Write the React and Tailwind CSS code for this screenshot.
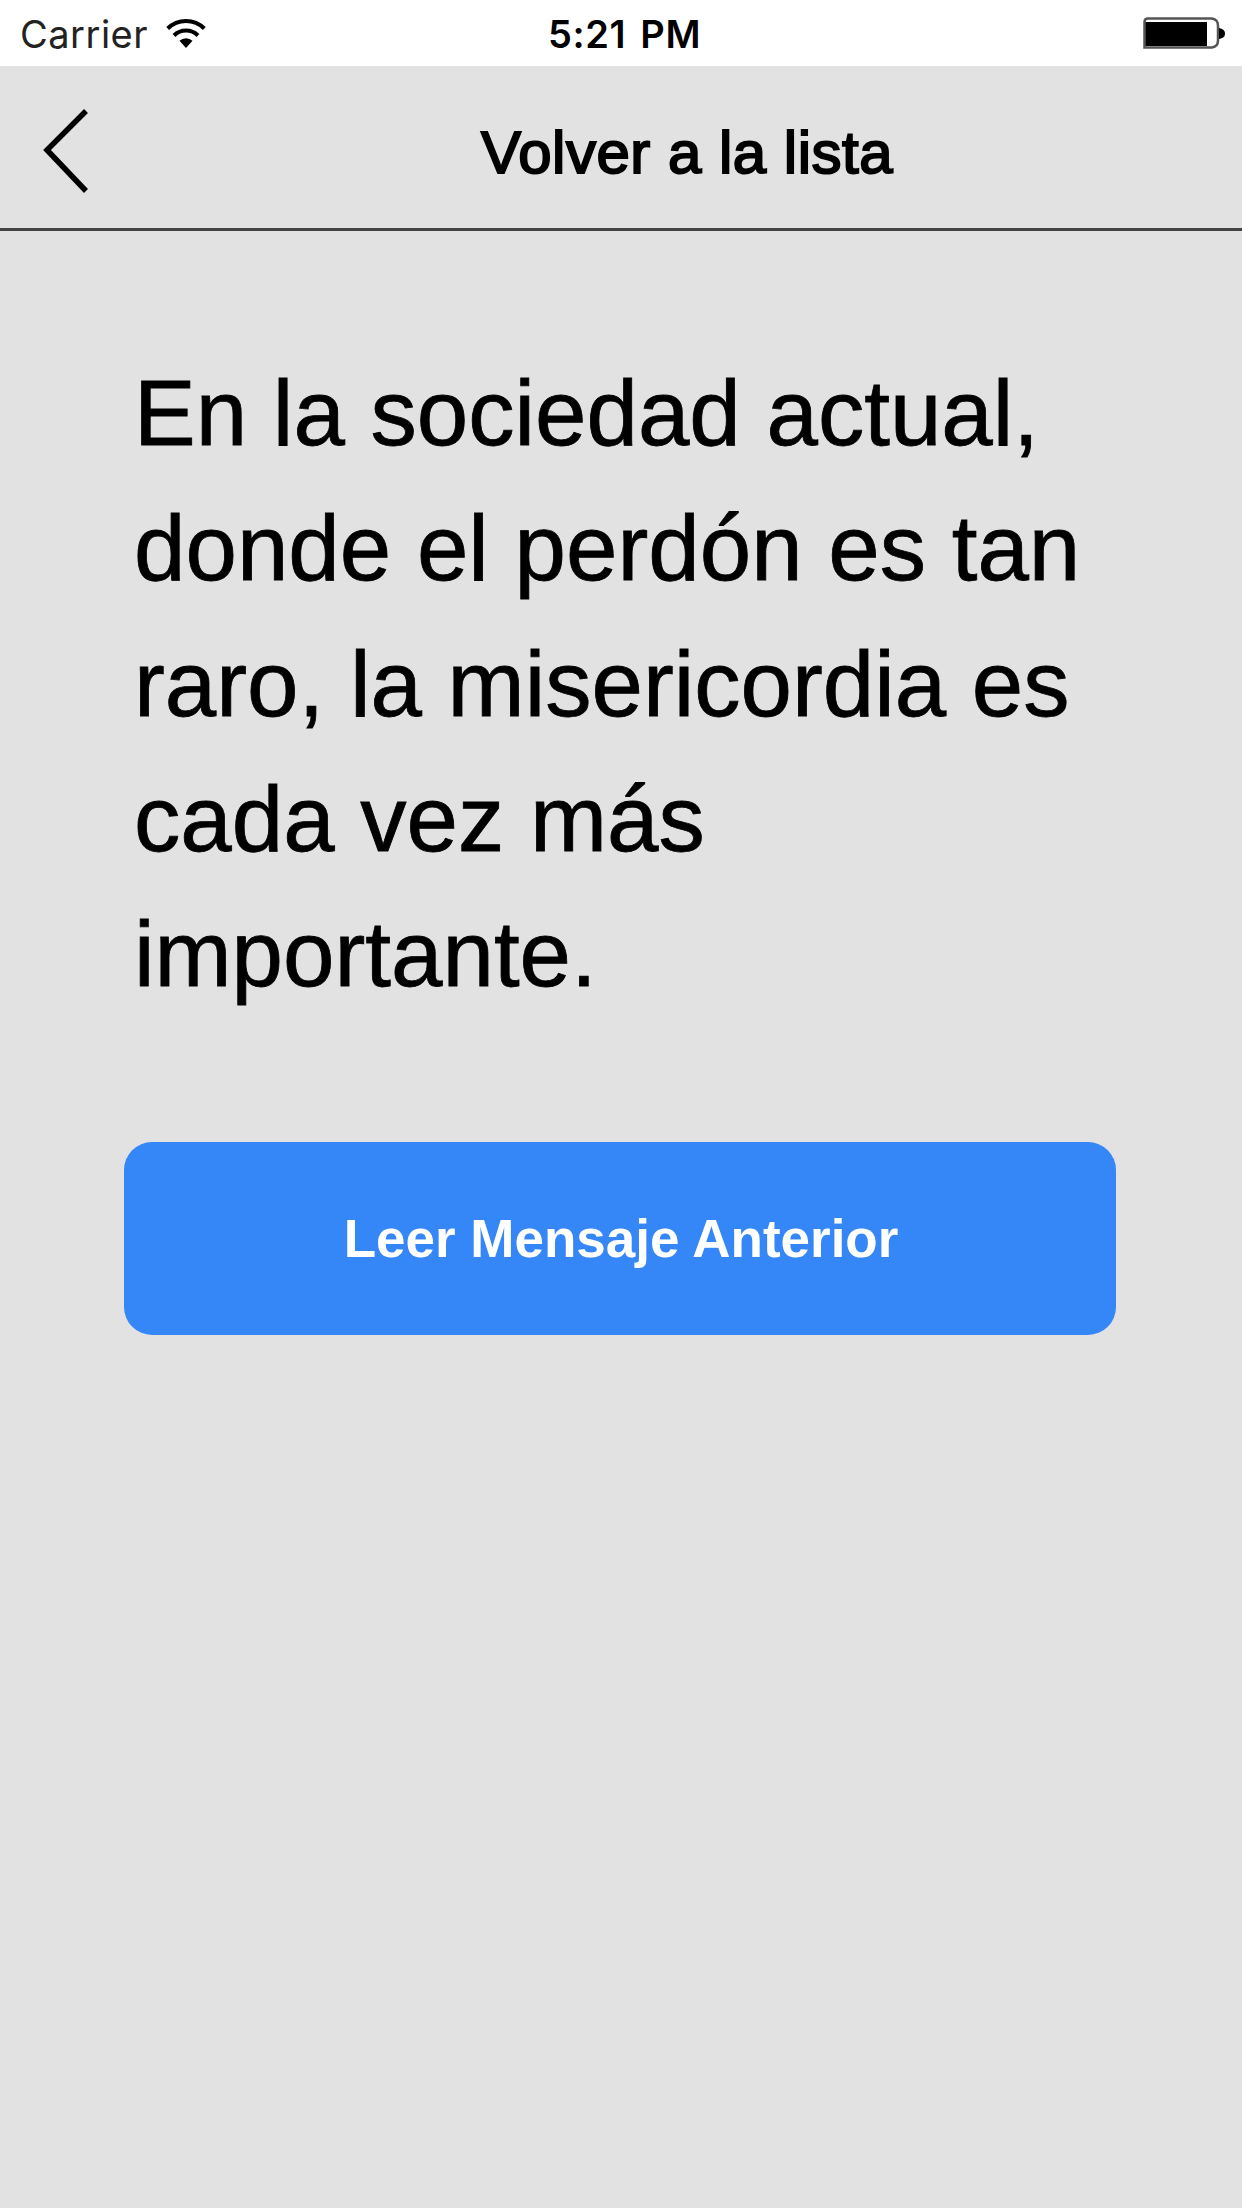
import React from "react";

function StatusBar() {
  return (
    <div className="flex justify-between items-center h-[66px] pt-0.5 pl-5 pr-[17px] bg-white font-['Inter',sans-serif] text-[38px] leading-none">
      <div className="flex flex-1 items-center gap-[18px] text-[#222]">
        <span className="tracking-[0.5px]">Carrier</span>
        <svg className="-mt-0.5" width="40" height="31" viewBox="0 0 40 31" fill="none" stroke="black" strokeWidth="4">
          <path d="M1.700 10.500a26 26 0 0 1 36.600 0" />
          <path d="M8 17.500a17 17 0 0 1 24 0" />
          <path d="M20 30l-6.500-7.200a9.500 9.500 0 0 1 13 0z" fill="black" stroke="none" />
        </svg>
      </div>
      <span className="pl-1 font-semibold tracking-[0.6px] [word-spacing:4px] text-black">5:21 PM</span>
      <div className="flex flex-1 justify-end">
        <svg className="-mt-0.5" width="82" height="32" viewBox="0 0 82 32">
          <path d="M5 1.500h64q6 1 6 7v15q0 6-6 7H1.500V5q0-3.500 3.500-3.500z" fill="white" stroke="#555" strokeWidth="2.500" />
          <path d="M2.500 5h61.500v24H2.500z" fill="black" />
          <path d="M76 11q6 1 6 5.500t-6 5.500z" fill="black" />
        </svg>
      </div>
    </div>
  );
}

function Header() {
  return (
    <div className="flex items-center h-[165px] pt-[7px] pl-[43px] border-b-3 border-[#444]">
      <svg width="46" height="84" viewBox="0 0 46 84" fill="none" stroke="black" strokeWidth="5.500">
        <path d="M43 2L4 41l39 41" />
      </svg>
      <h1 className="flex-1 pt-1 pl-[43px] text-center text-[60px] leading-none tracking-[0.5px] [-webkit-text-stroke:2px_black]">
        Volver a la lista
      </h1>
    </div>
  );
}

function App() {
  return (
    <div className="min-h-[2208px] bg-[#e2e2e2] text-black font-['Liberation_Sans',Arial,sans-serif]">
      <StatusBar />
      <Header />

      {/* Message */}
      <main className="px-[124px] pt-[115px]">
        <p className="pl-2.5 text-[92.5px] leading-[135.3px] [-webkit-text-stroke:0.8px_black]">
          En la sociedad actual, donde el perdón es tan raro, la misericordia es cada vez más importante.
        </p>

        <button className="mt-[120px] h-[193px] w-[992px] rounded-[28px] bg-[#3587f7] pl-0.5 text-[53px] font-bold text-white">
          Leer Mensaje Anterior
        </button>
      </main>
    </div>
  );
}

export default App;
